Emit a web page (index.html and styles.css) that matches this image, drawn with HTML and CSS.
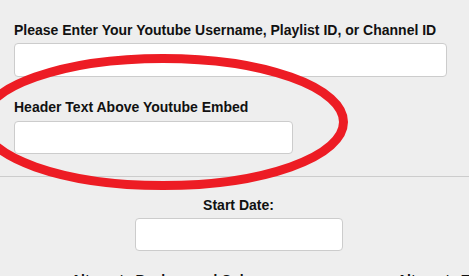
FILE: index.html
```html
<!DOCTYPE html>
<html lang="en">
<head>
    <meta charset="UTF-8">
    <title>Youtube Embed Settings</title>
    <link rel="stylesheet" href="styles.css">
</head>
<body>
    <div class="page">
        <div class="top-fields">
            <div class="field">
                <label for="channel">Please Enter Your Youtube Username, Playlist ID, or Channel ID</label>
                <input type="text" id="channel" class="input-wide">
            </div>
            <div class="field">
                <label for="header">Header Text Above Youtube Embed</label>
                <input type="text" id="header" class="input-mid">
            </div>
        </div>

        <hr class="divider">

        <div class="date-field">
            <label for="startDate">Start Date:</label>
            <input type="text" id="startDate" class="input-date">
        </div>

        <div class="colors">
            <div class="color-col">Alternate Background Color</div>
            <div class="color-col">Alternate Text Color</div>
        </div>

        <!-- red annotation ring drawn over the form -->
        <svg class="annotation" width="469" height="276" viewBox="0 0 469 276">
            <ellipse cx="163" cy="122" rx="180.5" ry="63.5" fill="none" stroke="#ed1c24" stroke-width="9"/>
        </svg>
    </div>
</body>
</html>
```

FILE: styles.css
```css
* {
    box-sizing: border-box;
    margin: 0;
    padding: 0;
}

body {
    font-family: 'Liberation Sans', Arial, sans-serif;
    background-color: #eeeeee;
    color: #111;
    overflow: hidden;
}

.page {
    position: relative;
    height: 276px;
}

label {
    display: block;
    font-size: 14px;
    font-weight: bold;
    line-height: 16px;
    margin-bottom: 5px;
}

input {
    display: block;
    background-color: #fff;
    border: 1px solid #cccccc;
    border-radius: 4px;
    font-size: 13px;
}

.top-fields {
    padding: 22px 0 0 14px;
}

.field {
    margin-bottom: 22px;
}

.field + .field label {
    margin-bottom: 6px;
}

.input-wide {
    width: 433px;
    height: 34px;
}

.input-mid {
    width: 279px;
    height: 33px;
}

.divider {
    border: none;
    border-top: 1px solid #cccccc;
    margin: 0;
}

.date-field {
    display: flex;
    flex-direction: column;
    align-items: center;
    padding: 20px 0 0 8px;
}

.input-date {
    width: 208px;
    height: 33px;
}

.colors {
    display: grid;
    grid-template-columns: 326px 1fr;
    padding: 21px 0 0 71px;
    font-size: 14px;
    font-weight: bold;
    line-height: 16px;
    white-space: nowrap;
}

.annotation {
    position: absolute;
    top: 0;
    left: 0;
    pointer-events: none;
}
```
